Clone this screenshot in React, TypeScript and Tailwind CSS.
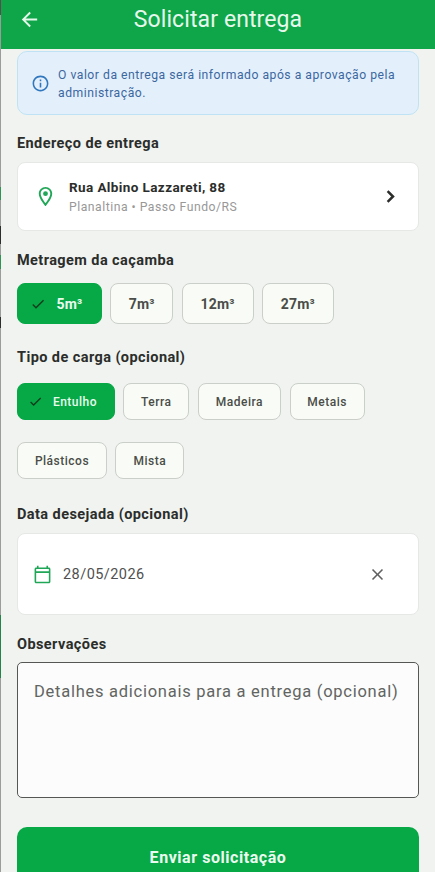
import { useState } from "react";
import type { ReactNode } from "react";
import clsx from "clsx";
import {
  MdArrowBack,
  MdCheck,
  MdClose,
  MdInfoOutline,
  MdOutlineCalendarToday,
  MdOutlineLocationOn,
} from "react-icons/md";

const sizes = [
  { label: "5m³", width: "w-[85px]" },
  { label: "7m³", width: "w-[63px]" },
  { label: "12m³", width: "w-[72px]" },
  { label: "27m³", width: "w-[72px]" },
];

const loads = [
  { label: "Entulho", width: "w-[98px]" },
  { label: "Terra", width: "w-[66px]" },
  { label: "Madeira", width: "w-[83.7px]" },
  { label: "Metais", width: "w-[75px]" },
  { label: "Plásticos", width: "w-[90px]" },
  { label: "Mista", width: "w-[69px]" },
];

// sliver of the page behind the sheet
const edge = [
  { height: "h-[15px]", color: "bg-[#5b4a50]" },
  { height: "h-[172px]", color: "bg-[#9c9c9c]" },
  { height: "h-[13px]", color: "bg-[#2f9355]" },
  { height: "h-[26px]", color: "bg-[#9c9c9c]" },
  { height: "h-[18px]", color: "bg-[#2d2d2d]" },
  { height: "h-[11px]", color: "bg-[#9c9c9c]" },
  { height: "h-[14px]", color: "bg-[#2f9355]" },
  { height: "h-[48px]", color: "bg-[#9c9c9c]" },
  { height: "h-[11px]", color: "bg-[#2d2d2d]" },
  { height: "h-[287px]", color: "bg-[#9c9c9c]" },
  { height: "h-[63px]", color: "bg-[#23834a]" },
  { height: "h-[194px]", color: "bg-[#9c9c9c]" },
];

function SectionTitle({ children }: { children: ReactNode }) {
  return (
    <h2 className="h-5 pt-px text-[14.5px] font-bold leading-5 tracking-[0.42px] text-[#2b2d2b]">
      {children}
    </h2>
  );
}

interface ChipProps {
  label: string;
  width: string;
  large?: boolean;
  selected: boolean;
  onClick: () => void;
}

function Chip({ label, width, large, selected, onClick }: ChipProps) {
  return (
    <button
      onClick={onClick}
      className={clsx(
        "flex shrink-0 items-center justify-center rounded-lg border",
        width,
        large
          ? "h-[41px] pt-px text-[14px] font-bold tracking-[0.2px]"
          : "h-[37px] text-[12px] font-medium tracking-[0.5px]",
        selected
          ? "border-[#07a846] bg-[#07a846] pr-[7px] text-[#e9fbef]"
          : "border-[#cbcfc9] bg-[#f9fcf6] text-[#4a4d48]"
      )}
    >
      {selected && (
        <MdCheck
          className={clsx(
            "text-[#0d3d1c]",
            large ? "mr-[11px] size-4" : "mr-[10px] size-[15px]"
          )}
        />
      )}
      {label}
    </button>
  );
}

export default function App() {
  const [size, setSize] = useState("5m³");
  const [load, setLoad] = useState("Entulho");
  const [date, setDate] = useState("28/05/2026");

  return (
    <div className="flex h-[872px] w-[435px] overflow-hidden bg-[#f0f3f0] font-['Roboto',sans-serif]">
      <div className="flex w-px shrink-0 flex-col">
        {edge.map((part, i) => (
          <div key={i} className={clsx("shrink-0", part.height, part.color)} />
        ))}
      </div>

      <div className="flex flex-1 flex-col">
        <header className="grid h-[49px] shrink-0 grid-cols-[56px_1fr_56px] items-center bg-[#0ea649] pb-[10px] text-[#e6f8ec]">
          <button className="flex justify-center">
            <MdArrowBack className="size-[23px]" />
          </button>
          <h1 className="text-center text-[23px] leading-7 tracking-[0.1px]">
            Solicitar entrega
          </h1>
        </header>

        <main className="flex flex-col pl-4 pr-4 pt-[2px]">
          <div className="flex h-[64px] items-center rounded-[10px] border border-[#bfe3f4] bg-[#e3f0fc] pl-[13px]">
            <MdInfoOutline className="mr-[8px] size-[19px] text-[#3177bd]" />
            <p className="pt-px text-[12.2px] leading-[18px] tracking-[0.51px] text-[#3c679f]">
              O valor da entrega será informado após a aprovação pela
              <br />
              administração.
            </p>
          </div>

          <div className="mt-[18px]">
            <SectionTitle>Endereço de entrega</SectionTitle>
          </div>
          <button className="mt-[9px] flex h-[69px] items-center rounded-lg border border-[#e5e8e5] bg-white pl-[16px] pr-[16px] text-left">
            <MdOutlineLocationOn className="mr-[12px] size-[23px] text-[#20a657]" />
            <div className="flex-1 pt-px">
              <div className="text-[13.5px] font-bold leading-5 tracking-[0.4px] text-[#2b2d2b]">
                Rua Albino Lazzareti, 88
              </div>
              <div className="text-[12.2px] leading-5 tracking-[0.51px] text-[#989898]">
                Planaltina • Passo Fundo/RS
              </div>
            </div>
            <svg
              viewBox="0 0 24 24"
              className="size-[23px] fill-none stroke-[#2b2d2b] stroke-[2.6]"
            >
              <path d="M9 6.5l5.6 5.5L9 17.5" />
            </svg>
          </button>

          <div className="mt-[19px]">
            <SectionTitle>Metragem da caçamba</SectionTitle>
          </div>
          <div className="mt-[13px] flex gap-[8.3px]">
            {sizes.map((item) => (
              <Chip
                key={item.label}
                {...item}
                large
                selected={size === item.label}
                onClick={() => setSize(item.label)}
              />
            ))}
          </div>

          <div className="mt-[23px]">
            <SectionTitle>Tipo de carga (opcional)</SectionTitle>
          </div>
          <div className="mt-4 flex flex-wrap gap-x-[8.3px] gap-y-[22px]">
            {loads.map((item) => (
              <Chip
                key={item.label}
                {...item}
                selected={load === item.label}
                onClick={() => setLoad(item.label)}
              />
            ))}
          </div>

          <div className="mt-[25px]">
            <SectionTitle>Data desejada (opcional)</SectionTitle>
          </div>
          <div className="mt-[9px] flex h-[82px] items-center rounded-lg border border-[#e5e8e5] bg-white pl-[15px] pr-[31px]">
            <MdOutlineCalendarToday className="mr-[11px] size-[19px] text-[#20a657]" />
            <span className="flex-1 pt-px text-[14.5px] tracking-[0.45px] text-[#505050]">
              {date}
            </span>
            <button onClick={() => setDate("")}>
              <MdClose className="size-[19px] text-[#606060]" />
            </button>
          </div>

          <div className="mt-[19px]">
            <SectionTitle>Observações</SectionTitle>
          </div>
          <textarea
            className="mt-2 h-[136px] resize-none rounded-[5px] border border-[#555755] bg-[#fbfcfb] px-4 py-[17px] text-[16.5px] leading-6 tracking-[0.74px] outline-none placeholder:text-[#626462]"
            placeholder="Detalhes adicionais para a entrega (opcional)"
          />

          <button className="mt-[29px] h-[60px] shrink-0 rounded-[10px] bg-[#07a846] pt-px text-[16px] font-bold tracking-[0.55px] text-[#ebfbf0]">
            Enviar solicitação
          </button>
        </main>
      </div>
    </div>
  );
}
